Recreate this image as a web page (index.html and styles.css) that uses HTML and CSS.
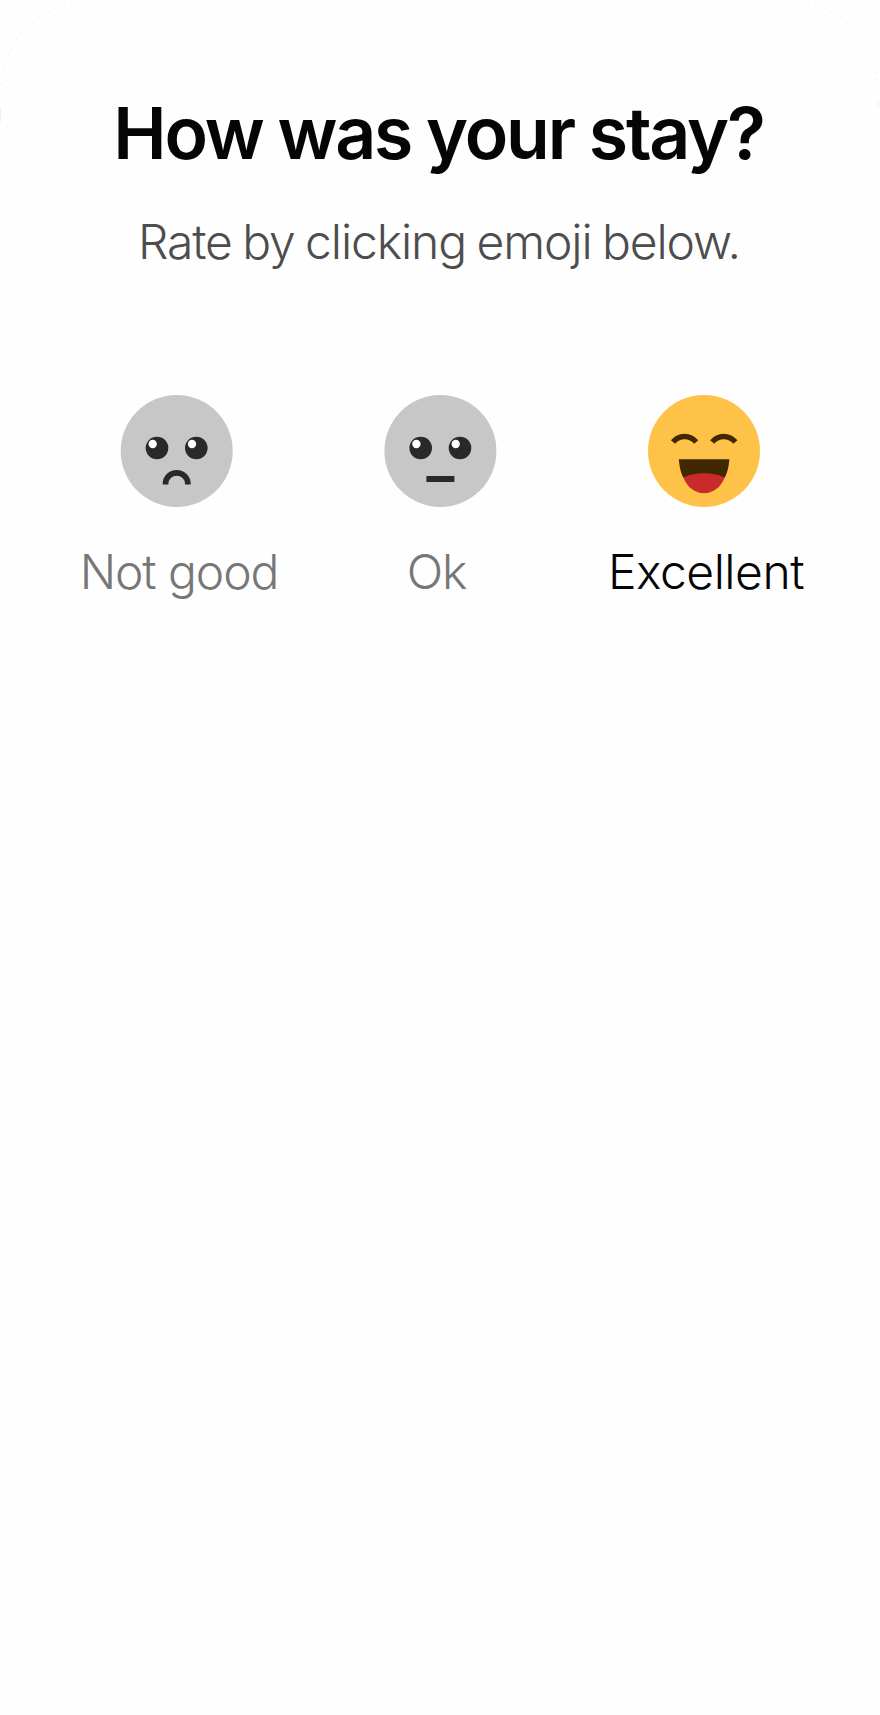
FILE: index.html
```html
<!DOCTYPE html>
<html lang="en">
<head>
<meta charset="utf-8">
<title>How was your stay?</title>
<link rel="stylesheet" href="styles.css">
</head>
<body>
<main class="card">
  <svg class="outline" viewBox="0 0 880 124" aria-hidden="true">
    <path class="outline-curve" d="M1.5 85C3 42 38 2.5 90 2.5M790 2.5C842 2.5 875 42 877.500 85"/>
    <path class="outline-side" d="M.5 108V122M878.500 101V107"/>
  </svg>
  <h1 class="title">How was your stay?</h1>
  <p class="subtitle">Rate by clicking emoji below.</p>
  <div class="ratings">
    <div class="rating rating-bad">
      <svg class="face" viewBox="0 0 112 112">
        <circle class="skin" cx="56.700" cy="56" r="56"/>
        <circle class="ink" cx="37" cy="53" r="11.300"/><circle class="ink" cx="76.300" cy="53" r="11.300"/>
        <circle class="glint" cx="32.700" cy="49" r="4.200"/><circle class="glint" cx="72" cy="49" r="4.200"/>
        <path class="frown" d="M45.500 89.500V89A11.200 11.200 0 0 1 67.900 89V89.500"/>
      </svg>
      <span class="label">Not good</span>
    </div>
    <div class="rating rating-ok">
      <svg class="face" viewBox="0 0 112 112">
        <circle class="skin" cx="56.400" cy="56" r="56"/>
        <circle class="ink" cx="36.700" cy="53" r="11.300"/><circle class="ink" cx="76" cy="53" r="11.300"/>
        <circle class="glint" cx="32.400" cy="49" r="4.200"/><circle class="glint" cx="71.700" cy="49" r="4.200"/>
        <rect class="ink" x="42.400" y="81" width="28" height="6"/>
      </svg>
      <span class="label">Ok</span>
    </div>
    <div class="rating rating-great">
      <svg class="face" viewBox="0 0 112 112">
        <circle class="sunny" cx="56" cy="56" r="56"/>
        <path class="brow" d="M25 47C31 39.600 42 39.600 48.200 47M64.200 47C70.200 39.600 81.200 39.600 87.400 47"/>
        <path class="mouth" d="M30.800 64.300H81.400C80.500 76 77.600 81 76.600 82.800H35.500C34.500 81 31.700 76 30.800 64.300Z"/>
        <path class="tongue" d="M35.500 82.800C45 76.800 67 76.800 76.600 82.800C72.500 92.500 65.500 98.200 56 98.200S39.500 92.500 35.500 82.800Z"/>
      </svg>
      <span class="label">Excellent</span>
    </div>
  </div>
</main>
</body>
</html>
```
FILE: styles.css
```css
* { box-sizing: border-box; }
body { margin: 0; background: #fefefe; }
.card {
  position: relative;
  min-height: 1715px;
  padding-top: 88px;
  font-family: Inter, "Open Sans", sans-serif;
  text-align: center;
}
.outline { position: absolute; inset: 0 0 auto; width: 880px; height: 124px; fill: none; }
.outline-curve { stroke: #f0f0f0; stroke-width: 1; stroke-dasharray: 2 4; }
.outline-side { stroke: #f0f0f0; stroke-width: 1; }
.title {
  margin: 0;
  padding-right: 3px;
  color: #050505;
  font-size: 71.5px;
  font-weight: 600;
  line-height: 90px;
  letter-spacing: -2.15px;
  word-spacing: -1px;
  white-space: nowrap;
}
.subtitle {
  margin: 34px 0 0;
  padding-right: 2px;
  color: #4d4d4d;
  font-size: 48px;
  font-weight: 350;
  line-height: 60px;
  letter-spacing: -1.1px;
  word-spacing: -2px;
  white-space: nowrap;
}
.ratings {
  display: grid;
  grid-template-columns: repeat(3, 264px);
  justify-content: center;
  margin-top: 123px;
}
.rating { display: flex; flex-direction: column; align-items: center; gap: 35px; }
.face { display: block; width: 112px; height: 112px; overflow: visible; }
.label {
  color: #777;
  font-size: 48px;
  font-weight: 350;
  line-height: 60px;
  letter-spacing: -1.1px;
  white-space: nowrap;
}
.rating-bad .label { padding-left: 6px; }
.rating-ok .label { padding-right: 7px; }
.rating-great .label { padding-left: 4px; color: #050505; letter-spacing: -.5px; }
.skin { fill: #c7c7c7; }
.ink { fill: #292929; }
.glint { fill: #fff; }
.frown { fill: none; stroke: #292929; stroke-width: 5.7; }
.sunny { fill: #ffc249; }
.brow { fill: none; stroke: #402800; stroke-width: 5.4; }
.mouth { fill: #402800; }
.tongue { fill: #c92a2a; }
```
